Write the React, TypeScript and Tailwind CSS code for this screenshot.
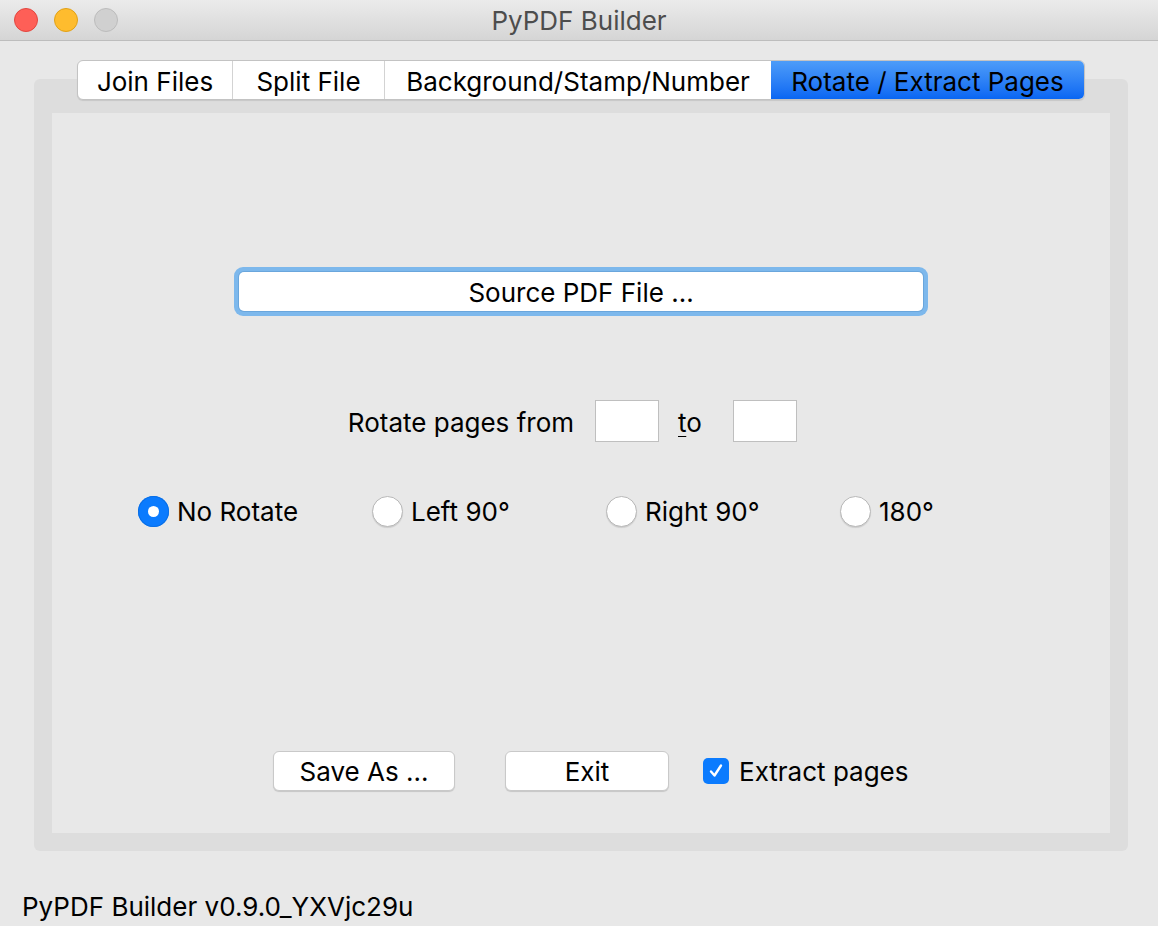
import React from "react";

function Radio({ checked, label }: { checked?: boolean; label: string }) {
  return (
    <div className="flex w-[234px] items-center">
      {checked ? (
        <div className="flex h-[31px] w-[31px] items-center justify-center rounded-full bg-[#0b7bfe] shadow-[inset_0_0_0_1px_#0a6fe6]">
          <div className="h-[11px] w-[11px] rounded-full bg-white" />
        </div>
      ) : (
        <div className="h-[31px] w-[31px] rounded-full border border-[#b8b8b8] bg-white shadow-[0_1px_1px_rgba(0,0,0,0.12)]" />
      )}
      <span className="ml-[8px] pt-[1px]">{label}</span>
    </div>
  );
}

function Btn({ w, children }: { w: string; children: React.ReactNode }) {
  return (
    <div
      className={`${w} flex h-[40px] items-center justify-center rounded-[6px] border border-[#c9c9c9] bg-white pt-[1px] shadow-[0_1px_1px_rgba(0,0,0,0.15)]`}
    >
      {children}
    </div>
  );
}

export default function App() {
  return (
    <div
      className="flex h-[926px] w-[1158px] flex-col overflow-hidden bg-[#e8e8e8] text-[26px] leading-[30px] text-black"
      style={{ fontFamily: "Inter, 'Liberation Sans', sans-serif" }}
    >
      {/* Title bar */}
      <div className="relative flex h-[41px] shrink-0 items-center justify-center border-b border-[#bdbdbd] bg-gradient-to-b from-[#ebebeb] to-[#d5d5d5] pt-[2px]">
        <div className="absolute left-[14px] top-[8px] flex gap-[16px]">
          <div className="h-[24px] w-[24px] rounded-full border border-[#e2463f] bg-[#fe5f57]" />
          <div className="h-[24px] w-[24px] rounded-full border border-[#e1a116] bg-[#febc2e]" />
          <div className="h-[24px] w-[24px] rounded-full border border-[#bcbcbc] bg-[#d0d0d0]" />
        </div>
        <span className="text-[#4d4d4d]">PyPDF Builder</span>
      </div>

      {/* Main */}
      <div className="flex flex-col pl-[34px] pr-[30px] pt-[19px]">
        <div className="relative z-10 flex h-[40px] justify-center">
          <div className="flex overflow-hidden rounded-[6px] border border-[#c3c3c3] bg-white shadow-[0_1px_1px_rgba(0,0,0,0.1)]">
            <div className="flex w-[155px] items-center justify-center border-r border-[#d3d3d3] pt-[3px]">Join Files</div>
            <div className="flex w-[152px] items-center justify-center border-r border-[#d3d3d3] pt-[3px]">Split File</div>
            <div className="flex w-[386px] items-center justify-center pt-[3px]">Background/Stamp/Number</div>
            <div className="flex w-[313px] items-center justify-center bg-gradient-to-b from-[#4d9cf8] to-[#0866f3] pt-[3px]">
              Rotate / Extract Pages
            </div>
          </div>
        </div>
        <div className="-mt-[21px] flex h-[772px] flex-col rounded-[6px] bg-[#dddddd] px-[18px] pb-[18px] pt-[34px]">
          <div className="flex flex-1 flex-col bg-[#e8e8e8]">
            {/* Source button */}
            <div className="mx-auto mt-[154px] rounded-[9px] bg-[#7db8ec] p-[5px]">
              <div className="flex h-[39px] w-[684px] items-center justify-center rounded-[5px] bg-white pt-[3px] shadow-[0_0_0_1px_#6aa6dc]">
                Source PDF File ...
              </div>
            </div>

            {/* Rotate pages row */}
            <div className="mt-[84px] flex h-[42px] items-center pl-[277px]">
              <span className="w-[245px] pt-[3px] text-right">Rotate pages from</span>
              <div className="ml-[21px] h-[42px] w-[64px] border border-[#bfbfbf] bg-white" />
              <span className="w-[74px] pl-[19px] pt-[3px]">
                <span className="underline decoration-1 underline-offset-[4px]">t</span>o
              </span>
              <div className="h-[42px] w-[64px] border border-[#bfbfbf] bg-white" />
            </div>

            {/* Radios */}
            <div className="mt-[54px] flex pl-[86px]">
              <Radio checked label="No Rotate" />
              <Radio label="Left 90°" />
              <Radio label="Right 90°" />
              <Radio label="180°" />
            </div>

            {/* Bottom buttons */}
            <div className="mt-auto mb-[42px] flex items-center pl-[221px]">
              <Btn w="w-[182px]">Save As ...</Btn>
              <div className="ml-[50px]">
                <Btn w="w-[164px]">Exit</Btn>
              </div>
              <div className="ml-[34px] flex h-[26px] w-[26px] items-center justify-center rounded-[5px] bg-[#0b7bfe]">
                <svg width="18" height="18" viewBox="0 0 18 18" fill="none">
                  <path d="M4 9.5 L7.5 13.5 L14 3.5" stroke="white" strokeWidth="2.4" strokeLinecap="round" strokeLinejoin="round" />
                </svg>
              </div>
              <span className="ml-[10px] pt-[1px]">Extract pages</span>
            </div>
          </div>
        </div>
      </div>

      {/* Footer */}
      <div className="pl-[22px] pt-[41px]">PyPDF Builder v0.9.0_YXVjc29u</div>
    </div>
  );
}
